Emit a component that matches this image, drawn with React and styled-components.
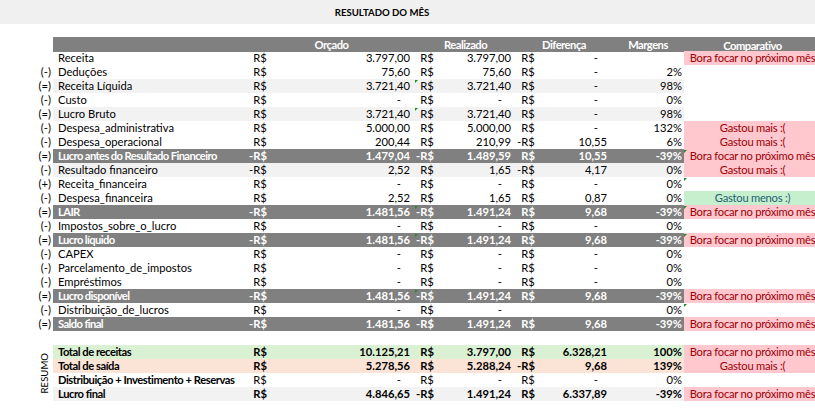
import React from "react";
import styled, { createGlobalStyle, css } from "styled-components";

const GlobalStyle = createGlobalStyle`
  html, body { margin: 0; padding: 0; background: #fff; overflow: hidden; }
  body {
    font-family: Lato, "Liberation Sans", Arial, sans-serif;
    font-size: 11.2px;
    color: #000;
  }
`;

const COLS = "53px 195px 167px 101px 96px 72px 137px";

const TONES = {
  plain: { bg: "transparent", fg: "#000" },
  light: { bg: "#f2f2f2", fg: "#000" },
  dark: { bg: "#808080", fg: "#fff" },
  green: { bg: "#daf1d3", fg: "#000" },
  orange: { bg: "#fbe3d6", fg: "#000" },
};

const Sheet = styled.div`
  width: 815px;
  height: 414px;
  overflow: hidden;
`;

const TitleBar = styled.div`
  display: grid;
  grid-template-columns: ${COLS};
  height: 24px;
  background: #f0f0f0;
  align-items: center;
  margin-bottom: 13px;
`;

const Title = styled.div`
  grid-column: 3 / span 2;
  text-align: center;
  font-weight: 700;
  font-size: 9.6px;
  padding-top: 1px;
`;

const Grid = styled.div`
  display: grid;
  grid-template-columns: ${COLS};
  grid-auto-rows: 14px;
  line-height: 14px;
  white-space: nowrap;
  margin-bottom: ${(p) => p.$gap || 0}px;
`;

const HeaderCell = styled.div`
  background: #808080;
  color: #fff;
  font-weight: 700;
  text-align: center;
  height: 15px;
  line-height: 15px;
  letter-spacing: -0.5px;
  padding-top: ${(p) => (p.$big ? "1px" : "0")};
`;

const HeaderBlank = styled.div``;

const flagCss = css`
  &::before {
    content: "";
    position: absolute;
    top: 1px;
    left: 0;
    border-top: 3px solid #1f8a1f;
    border-right: 3px solid transparent;
  }
`;

const Cell = styled.div`
  position: relative;
  overflow: hidden;
  background: ${(p) => TONES[p.$tone || "plain"].bg};
  color: ${(p) => TONES[p.$tone || "plain"].fg};
  font-weight: ${(p) => (p.$bold ? 700 : 400)};
  ${(p) => p.$flag && flagCss}
`;

const Prefix = styled.div`
  text-align: right;
  padding-right: 2px;
`;

const Label = styled(Cell)`
  padding-left: 5px;
  letter-spacing: ${(p) =>
    p.$tone === "dark" ? "-0.6px" : p.$bold ? "-0.45px" : "0"};
`;

const Money = styled(Cell)`
  display: flex;
  justify-content: space-between;
  padding: 0 5px 0 1px;
`;

const Sign = styled.span`
  visibility: ${(p) => (p.$show ? "visible" : "hidden")};
`;

const Amount = styled.span`
  padding-right: ${(p) => (p.$dash ? "9px" : "0")};
`;

const Pct = styled(Cell)`
  text-align: right;
  padding-right: 2px;
`;

const STATUS = {
  bad: { bg: "#ffc7ce", fg: "#9c0006" },
  good: { bg: "#c6efce", fg: "#245f73" },
  none: { bg: "transparent", fg: "#000" },
};

const Comp = styled.div`
  position: relative;
  text-align: center;
  letter-spacing: -0.25px;
  background: ${(p) => STATUS[p.$status].bg};
  color: ${(p) => STATUS[p.$status].fg};
  ${(p) => p.$flag && flagCss}
`;

const ResumoCell = styled.div`
  grid-row: 1 / span 4;
  grid-column: 1;
  display: flex;
  justify-content: flex-end;
  align-items: center;
  padding-right: 3px;
`;

const Vertical = styled.span`
  writing-mode: vertical-rl;
  transform: rotate(180deg);
  line-height: 11px;
  font-size: 9.6px;
`;

const BAD = "Bora focar no próximo mês";

const rows = [
  { p: "", l: "Receita", o: "3.797,00", r: "3.797,00", d: "-", m: "", c: ["bad", BAD] },
  { p: "(-)", l: "Deduções", o: "75,60", r: "75,60", d: "-", m: "2%" },
  { p: "(=)", l: "Receita Líquida", t: "light", o: "3.721,40", r: "3.721,40", rf: 1, d: "-", m: "98%" },
  { p: "(-)", l: "Custo", o: "-", r: "-", d: "-", m: "0%" },
  { p: "(=)", l: "Lucro Bruto", t: "light", o: "3.721,40", r: "3.721,40", rf: 1, d: "-", m: "98%" },
  { p: "(-)", l: "Despesa_administrativa", o: "5.000,00", r: "5.000,00", d: "-", m: "132%", c: ["bad", "Gastou mais :("] },
  { p: "(-)", l: "Despesa_operacional", o: "200,44", r: "210,99", d: "-10,55", m: "6%", c: ["bad", "Gastou mais :("] },
  { p: "(=)", l: "Lucro antes do Resultado Financeiro", t: "dark", o: "-1.479,04", r: "-1.489,59", d: "10,55", m: "-39%", c: ["bad", BAD], cf: 1 },
  { p: "(-)", l: "Resultado financeiro", t: "light", o: "-2,52", r: "1,65", d: "-4,17", m: "0%", c: ["bad", "Gastou mais :("] },
  { p: "(+)", l: "Receita_financeira", o: "-", r: "-", d: "-", m: "0%", cf: 1 },
  { p: "(-)", l: "Despesa_financeira", o: "2,52", r: "1,65", d: "0,87", m: "0%", c: ["good", "Gastou menos :)"] },
  { p: "(=)", l: "LAIR", t: "dark", o: "-1.481,56", r: "-1.491,24", rf: 1, d: "9,68", m: "-39%", c: ["bad", BAD], cf: 1 },
  { p: "(-)", l: "Impostos_sobre_o_lucro", o: "-", r: "-", d: "-", m: "0%" },
  { p: "(=)", l: "Lucro líquido", t: "dark", o: "-1.481,56", r: "-1.491,24", rf: 1, d: "9,68", m: "-39%", c: ["bad", BAD], cf: 1 },
  { p: "(-)", l: "CAPEX", o: "-", r: "-", d: "-", m: "0%" },
  { p: "(-)", l: "Parcelamento_de_impostos", o: "-", r: "-", d: "-", m: "0%" },
  { p: "(-)", l: "Empréstimos", o: "-", r: "-", d: "-", m: "0%" },
  { p: "(=)", l: "Lucro disponível", t: "dark", o: "-1.481,56", r: "-1.491,24", rf: 1, d: "9,68", m: "-39%", c: ["bad", BAD] },
  { p: "(-)", l: "Distribuição_de_lucros", o: "-", r: "-", d: null, m: "0%", cf: 1 },
  { p: "(=)", l: "Saldo final", t: "dark", o: "-1.481,56", r: "-1.491,24", d: "9,68", m: "-39%", c: ["bad", BAD] },
];

const summary = [
  { l: "Total de receitas", t: "green", b: 1, o: "10.125,21", r: "3.797,00", d: "6.328,21", m: "100%", c: ["bad", BAD] },
  { l: "Total de saída", t: "orange", b: 1, o: "5.278,56", r: "5.288,24", d: "-9,68", m: "139%", c: ["bad", "Gastou mais :("] },
  { l: "Distribuição + Investimento + Reservas", t: "plain", lb: 1, o: "-", r: "-", d: "-", m: "0%" },
  { l: "Lucro final", t: "light", b: 1, o: "4.846,65", r: "-1.491,24", d: "6.337,89", m: "-39%", c: ["bad", BAD] },
];

function MoneyCell({ value, tone, bold, flag }) {
  if (value === null) return <Money $tone={tone} $bold={bold} />;
  const neg = value.startsWith("-") && value !== "-";
  const num = neg ? value.slice(1) : value;
  return (
    <Money $tone={tone} $bold={bold} $flag={flag}>
      <span>
        <Sign $show={neg}>-</Sign>R$
      </span>
      <Amount $dash={num === "-"}>{num}</Amount>
    </Money>
  );
}

function DataRow({ row, tone, bold, labelBold }) {
  const lb = labelBold || bold;
  return (
    <>
      <Label $tone={tone} $bold={lb}>{row.l}</Label>
      <MoneyCell value={row.o} tone={tone} bold={bold} />
      <MoneyCell value={row.r} tone={tone} bold={bold} flag={row.rf} />
      <MoneyCell value={row.d} tone={tone} bold={bold} />
      <Pct $tone={tone} $bold={bold}>{row.m}</Pct>
      <Comp $status={row.c ? row.c[0] : "none"} $flag={row.cf}>
        {row.c ? row.c[1] : ""}
      </Comp>
    </>
  );
}

export default function App() {
  return (
    <Sheet>
      <GlobalStyle />
      <TitleBar>
        <Title>RESULTADO DO MÊS</Title>
      </TitleBar>
      <Grid $gap={14}>
        <HeaderBlank />
        <HeaderCell />
        <HeaderCell>Orçado</HeaderCell>
        <HeaderCell>Realizado</HeaderCell>
        <HeaderCell>Diferença</HeaderCell>
        <HeaderCell>Margens</HeaderCell>
        <HeaderCell $big>Comparativo</HeaderCell>
        {rows.map((row) => {
          const tone = row.t || "plain";
          const dark = tone === "dark";
          return (
            <React.Fragment key={row.l}>
              <Prefix>{row.p}</Prefix>
              <DataRow row={row} tone={tone} bold={dark} />
            </React.Fragment>
          );
        })}
      </Grid>
      <Grid>
        <ResumoCell>
          <Vertical>RESUMO</Vertical>
        </ResumoCell>
        {summary.map((row) => (
          <DataRow key={row.l} row={row} tone={row.t} bold={!!row.b} labelBold={!!row.lb} />
        ))}
      </Grid>
    </Sheet>
  );
}
